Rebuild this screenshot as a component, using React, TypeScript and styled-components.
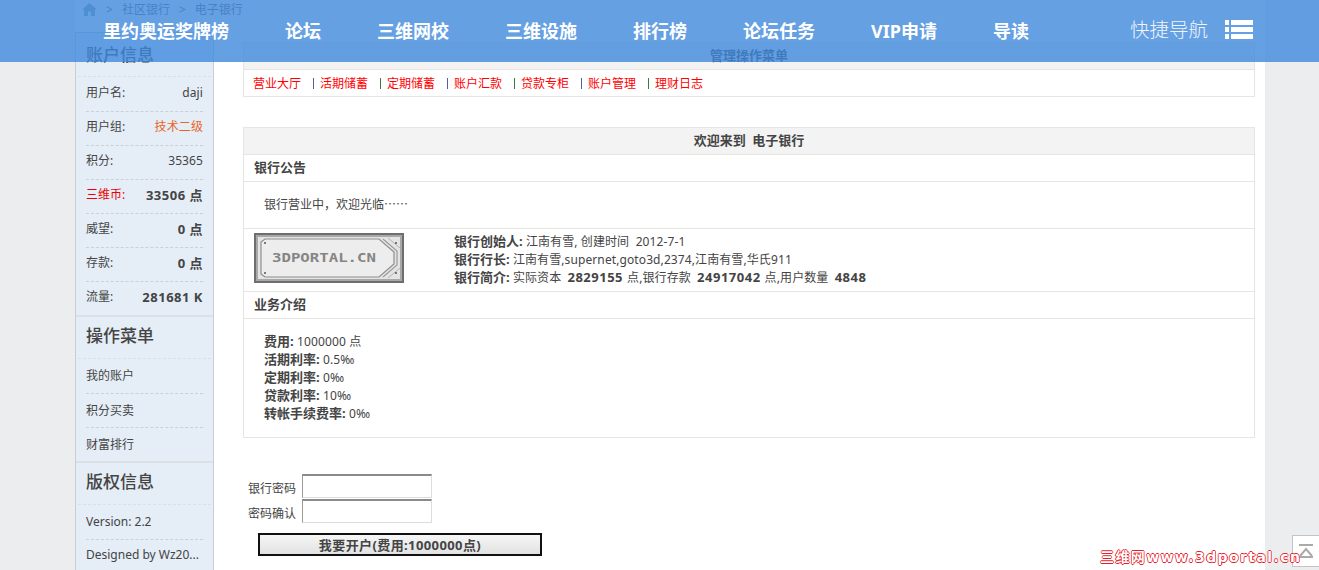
import React from "react";
import styled, { createGlobalStyle } from "styled-components";

const CJK = `"Noto Sans", "Noto Sans CJK SC", sans-serif`;

const Global = createGlobalStyle`
  html, body { margin: 0; padding: 0; height: 100%; overflow: hidden; }
  body { background: #ecedef; font: 12px/18px ${CJK}; color: #444; }
  * { box-sizing: border-box; }
`;

const Page = styled.div`
  position: relative;
  height: 570px;
  overflow: hidden;
`;

const Frame = styled.div`
  display: flex;
  flex-direction: column;
  width: 1190px;
  height: 570px;
  margin-left: 75px;
  background: #fff;
`;

const Crumbs = styled.div`
  display: flex;
  flex: none;
  align-items: center;
  gap: 9px;
  height: 32px;
  padding: 0 0 13px 7px;
  color: #666;
`;

const Body = styled.div`
  display: flex;
  flex: 1;
  min-height: 0;
`;

const Sidebar = styled.aside`
  flex: none;
  width: 139px;
  background: #e5eef7;
  border: solid #c8ced3;
  border-width: 1px 1px 0;
`;

const Section = styled.section`
  & + & { border-top: 2px solid #dbe0e4; }
`;

const SideTitle = styled.h3<{ $first?: boolean }>`
  height: ${(p) => (p.$first ? "44px" : "42px")};
  margin: 0 2px;
  padding: ${(p) => (p.$first ? "9px" : "6px")} 8px 0;
  font-size: 17px;
  font-weight: 500;
  line-height: 26px;
  color: #444;
  border-bottom: 1px dashed #d8e0e8;
`;

const SideRow = styled.div<{ $up?: boolean }>`
  display: flex;
  justify-content: space-between;
  align-items: center;
  height: 34px;
  margin: 0 10px;
  padding-bottom: ${(p) => (p.$up ? "3px" : "0")};
  border-top: 1px dashed #c9d0d6;
  &:first-of-type { border-top: none; }
  white-space: nowrap;
`;

const Label = styled.span<{ $red?: boolean }>`
  color: ${(p) => (p.$red ? "#ee0000" : "#444")};
`;

const Value = styled.span<{ $bold?: boolean; $orange?: boolean }>`
  font-weight: ${(p) => (p.$bold ? 700 : 400)};
  font-size: ${(p) => (p.$bold ? "13px" : "12px")};
  letter-spacing: ${(p) => (p.$bold ? "0.5px" : "0.1px")};
  color: ${(p) => (p.$orange ? "#e8651f" : "#444")};
`;

const Content = styled.main`
  flex: 1;
  min-width: 0;
  padding: 10px 10px 0 29px;
`;

const Panel = styled.div`
  border: 1px solid #e6e6e1;
  & + & { margin-top: 30px; }
`;

const PanelHead = styled.div`
  height: 27px;
  background: #f3f3f3;
  border-bottom: 1px solid #e6e6e1;
  font-size: 13px;
  font-weight: 700;
  line-height: 24px;
  text-align: center;
  word-spacing: 3px;
  color: #444;
`;

const PanelTitle = styled.div`
  height: 27px;
  padding-left: 10px;
  font-size: 13px;
  font-weight: 700;
  line-height: 24px;
  border-bottom: 1px solid #e6e6e1;
`;

const LinkRow = styled.nav`
  display: flex;
  align-items: center;
  height: 26px;
  padding: 1px 0 0 9px;
`;

const TabLink = styled.a`
  color: #f00;
  text-decoration: none;
  width: 48px;
  white-space: nowrap;
`;

const Pipe = styled.i<{ $green?: boolean }>`
  width: 1px;
  height: 11px;
  margin: 0 6px 0 12px;
  background: ${(p) => (p.$green ? "#3a7d3a" : "#5a5aa0")};
`;

const Notice = styled.div`
  height: 47px;
  padding: 13px 20px 0;
  font-family: "Noto Sans CJK SC", sans-serif;
  border-bottom: 1px solid #e6e6e1;
`;

const BankRow = styled.div`
  display: grid;
  grid-template-columns: 200px 1fr;
  height: 63px;
  padding: 4px 10px 0;
  border-bottom: 1px solid #e6e6e1;
`;

const BankInfo = styled.div`
  letter-spacing: 0.1px;
  div { height: 18px; white-space: nowrap; }
  b { font-size: 13px; font-weight: 700; letter-spacing: 0; line-height: 16px; }
  b.num { letter-spacing: 0.5px; margin: 0 4px 0 3px; }
`;

const Terms = styled.div`
  height: 118px;
  padding: 14px 20px 0;
  letter-spacing: 0.15px;
  div { height: 18px; white-space: nowrap; }
  b { font-size: 13px; font-weight: 700; letter-spacing: 0; line-height: 16px; }
`;

const OpenForm = styled.form`
  margin-top: 35px;
  padding-left: 5px;
`;

const Field = styled.label`
  display: flex;
  align-items: flex-end;
  gap: 6px;
  height: 25px;
  span { width: 48px; line-height: 18px; white-space: nowrap; }
`;

const PassInput = styled.input`
  width: 130px;
  height: 24px;
  padding: 0;
  border: 1px solid #dcdcdc;
  border-top: 2px solid #8a8a8a;
  border-left: 1px solid #9a9a9a;
  background: #fff;
`;

const SubmitBtn = styled.button`
  display: block;
  width: 284px;
  height: 23px;
  margin: 10px 0 0 10px;
  padding: 0;
  border: 2px solid #111;
  background: linear-gradient(#f6f6f6, #e2e2e2);
  font: 700 13px/18px ${CJK};
  letter-spacing: 0.4px;
  color: #444;
`;

const TopBar = styled.header`
  position: absolute;
  inset: 0 0 auto 0;
  display: flex;
  align-items: center;
  height: 62px;
  padding: 0 66px 0 103px;
  background: rgba(62, 136, 220, 0.8);
`;

const MainNav = styled.nav`
  display: flex;
  gap: 56px;
`;

const MainLink = styled.a`
  font-size: 18px;
  font-weight: 700;
  line-height: 26px;
  color: #fff;
  white-space: nowrap;
`;

const Quick = styled.div`
  display: flex;
  align-items: center;
  gap: 17px;
  margin-left: auto;
  padding-bottom: 3px;
  font-size: 19.5px;
  font-weight: 300;
  color: #f0f5fc;
  white-space: nowrap;
`;

const ToTop = styled.div`
  position: absolute;
  right: 0;
  top: 535px;
  display: flex;
  align-items: center;
  justify-content: center;
  width: 27px;
  height: 32px;
  background: #fff;
  border: 1px solid #c4c4c4;
  border-right: none;
`;

const Watermark = styled.div`
  position: absolute;
  left: 1100px;
  top: 548px;
  font: 700 14px/18px "DejaVu Sans", "Noto Sans CJK SC", sans-serif;
  letter-spacing: 1.4px;
  color: #fff;
  white-space: nowrap;
  text-shadow: 0.8px 0 0 #e8202a, -0.8px 0 0 #e8202a, 0 0.8px 0 #e8202a, 0 -0.8px 0 #e8202a;
`;

const HomeIcon = () => (
  <svg width="15" height="13" viewBox="0 0 15 13">
    <path d="M7.5 0 15 6.5h-2V13H9V8.5H6V13H2V6.5H0z" fill="#8aa" />
  </svg>
);

const MenuIcon = () => (
  <svg width="28" height="19" viewBox="0 0 28 19" fill="#fff">
    <rect x="0" y="0" width="4" height="5" />
    <rect x="6" y="0" width="22" height="5" />
    <rect x="0" y="7" width="4" height="5" />
    <rect x="6" y="7" width="22" height="5" />
    <rect x="0" y="14" width="4" height="5" />
    <rect x="6" y="14" width="22" height="5" />
  </svg>
);

const TopIcon = () => (
  <svg width="16" height="14" viewBox="0 0 16 14" fill="none" stroke="#aaa" strokeWidth="2">
    <path d="M1 1h14" />
    <path d="M2 12 8 5l6 7" />
    <path d="M1 13h14" />
  </svg>
);

const BankLogo = () => (
  <svg width="150" height="50" viewBox="0 0 150 50">
    <rect width="150" height="50" fill="#6e6e6e" />
    <rect x="2" y="2" width="146" height="46" fill="#a8a8a8" />
    <rect x="4" y="4" width="142" height="42" fill="#e4e4e4" />
    <path d="M11 6h114l15 13v12l-15 13H11l-4-3V9z" fill="#ededed" stroke="#8e8e8e" strokeWidth="1.2" />
    <path d="M129 6l14 12v14l-14 12" fill="none" stroke="#9c9c9c" strokeWidth="1.2" />
    <path d="M134 5l12 10M134 45l12-10" fill="none" stroke="#b4b4b4" strokeWidth="1" />
    <circle cx="11" cy="10" r="1" fill="#555" />
    <circle cx="11" cy="40" r="1" fill="#555" />
    <circle cx="142" cy="10" r="1" fill="#555" />
    <circle cx="142" cy="40" r="1" fill="#555" />
    <text
      x="18"
      y="29"
      fontFamily="'DejaVu Sans Mono', monospace"
      fontWeight="700"
      fontSize="12"
      textLength="104"
      lengthAdjust="spacingAndGlyphs"
      fill="#858585"
    >
      3DPORTAL.CN
    </text>
  </svg>
);

const tabs = ["营业大厅", "活期储蓄", "定期储蓄", "账户汇款", "贷款专柜", "账户管理", "理财日志"];
const navItems = ["里约奥运奖牌榜", "论坛", "三维网校", "三维设施", "排行榜", "论坛任务", "VIP申请", "导读"];

export default function App() {
  return (
    <Page>
      <Global />
      <Frame>
        <Crumbs>
          <HomeIcon />
          <span>&gt;</span>
          <span>社区银行</span>
          <span>&gt;</span>
          <span>电子银行</span>
        </Crumbs>
        <Body>
          <Sidebar>
            <Section>
              <SideTitle $first>账户信息</SideTitle>
              <SideRow $up><Label>用户名:</Label><Value>daji</Value></SideRow>
              <SideRow $up><Label>用户组:</Label><Value $orange>技术二级</Value></SideRow>
              <SideRow $up><Label>积分:</Label><Value>35365</Value></SideRow>
              <SideRow $up><Label $red>三维币:</Label><Value $bold>33506 点</Value></SideRow>
              <SideRow $up><Label>威望:</Label><Value $bold>0 点</Value></SideRow>
              <SideRow $up><Label>存款:</Label><Value $bold>0 点</Value></SideRow>
              <SideRow $up><Label>流量:</Label><Value $bold>281681 K</Value></SideRow>
            </Section>
            <Section>
              <SideTitle>操作菜单</SideTitle>
              <SideRow>我的账户</SideRow>
              <SideRow>积分买卖</SideRow>
              <SideRow>财富排行</SideRow>
            </Section>
            <Section>
              <SideTitle>版权信息</SideTitle>
              <SideRow>Version: 2.2</SideRow>
              <SideRow $up>Designed by Wz20...</SideRow>
            </Section>
          </Sidebar>
          <Content>
            <Panel>
              <PanelHead>管理操作菜单</PanelHead>
              <LinkRow>
                {tabs.map((t, i) => (
                  <React.Fragment key={t}>
                    <TabLink>{t}</TabLink>
                    {i < tabs.length - 1 && <Pipe $green={i % 2 === 1} />}
                  </React.Fragment>
                ))}
              </LinkRow>
            </Panel>
            <Panel>
              <PanelHead>欢迎来到 电子银行</PanelHead>
              <PanelTitle>银行公告</PanelTitle>
              <Notice>银行营业中，欢迎光临……</Notice>
              <BankRow>
                <BankLogo />
                <BankInfo>
                  <div><b>银行创始人:</b> 江南有雪, 创建时间 &nbsp;2012-7-1</div>
                  <div><b>银行行长:</b> 江南有雪,supernet,goto3d,2374,江南有雪,华氏911</div>
                  <div>
                    <b>银行简介:</b> 实际资本 <b className="num">2829155</b>点,银行存款 <b className="num">24917042</b>点,用户数量 <b className="num">4848</b>
                  </div>
                </BankInfo>
              </BankRow>
              <PanelTitle>业务介绍</PanelTitle>
              <Terms>
                <div><b>费用:</b> 1000000 点</div>
                <div><b>活期利率:</b> 0.5‰</div>
                <div><b>定期利率:</b> 0‰</div>
                <div><b>贷款利率:</b> 10‰</div>
                <div><b>转帐手续费率:</b> 0‰</div>
              </Terms>
            </Panel>
            <OpenForm>
              <Field><span>银行密码</span><PassInput type="password" /></Field>
              <Field><span>密码确认</span><PassInput type="password" /></Field>
              <SubmitBtn type="button">我要开户(费用:1000000点)</SubmitBtn>
            </OpenForm>
          </Content>
        </Body>
      </Frame>
      <TopBar>
        <MainNav>
          {navItems.map((n) => (
            <MainLink key={n}>{n}</MainLink>
          ))}
        </MainNav>
        <Quick>
          快捷导航
          <MenuIcon />
        </Quick>
      </TopBar>
      <ToTop><TopIcon /></ToTop>
      <Watermark>三维网www.3dportal.cn</Watermark>
    </Page>
  );
}
